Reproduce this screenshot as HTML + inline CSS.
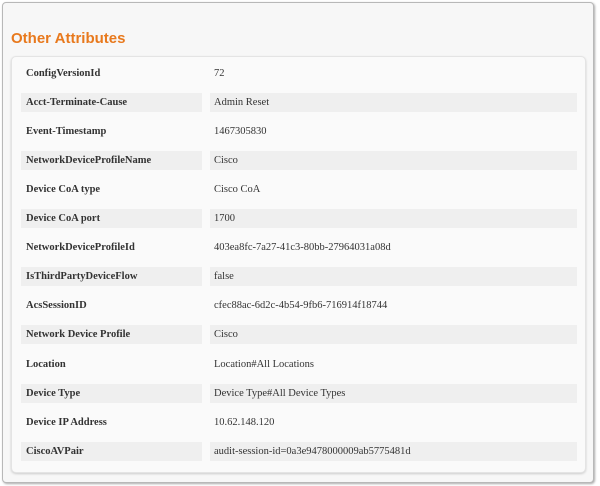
<!DOCTYPE html>
<html><head><style>
body{margin:0;width:600px;height:486px;background:#fff;position:relative;overflow:hidden;font-family:"Liberation Serif",serif;}
.outer{position:absolute;left:2px;top:2px;width:590px;height:479px;border:1px solid #b8b8b8;border-radius:4px;background:#f7f7f7;box-shadow:1px 1px 2px #aaa;}
h2{position:absolute;left:11px;top:30px;margin:0;font:bold 15px "Liberation Sans",sans-serif;color:#e8791d;}
.panel{position:absolute;left:11px;top:56px;width:573px;height:415px;background:#fafafa;border:1px solid #e4e4e4;border-radius:5px;box-shadow:0 1px 2px #ccc;}
.row{position:absolute;left:0;height:19px;font-size:10.5px;color:#333;}
.l,.v{position:absolute;top:0;height:19px;line-height:20px;}
.l{left:9px;width:181px;padding-left:5px;box-sizing:border-box;font-weight:bold;}
.v{left:198px;width:367px;padding-left:4px;box-sizing:border-box;}
.s .l,.s .v{background:#efefef;}
</style></head><body>
<div class="outer"></div>
<h2>Other Attributes</h2>
<div class="panel">
<div class="row" style="top:7px"><div class="l">ConfigVersionId</div><div class="v">72</div></div>
<div class="row s" style="top:36px"><div class="l">Acct-Terminate-Cause</div><div class="v">Admin Reset</div></div>
<div class="row" style="top:65px"><div class="l">Event-Timestamp</div><div class="v">1467305830</div></div>
<div class="row s" style="top:94px"><div class="l">NetworkDeviceProfileName</div><div class="v">Cisco</div></div>
<div class="row" style="top:123px"><div class="l">Device CoA type</div><div class="v">Cisco CoA</div></div>
<div class="row s" style="top:152px"><div class="l">Device CoA port</div><div class="v">1700</div></div>
<div class="row" style="top:181px"><div class="l">NetworkDeviceProfileId</div><div class="v">403ea8fc-7a27-41c3-80bb-27964031a08d</div></div>
<div class="row s" style="top:210px"><div class="l">IsThirdPartyDeviceFlow</div><div class="v">false</div></div>
<div class="row" style="top:239px"><div class="l">AcsSessionID</div><div class="v">cfec88ac-6d2c-4b54-9fb6-716914f18744</div></div>
<div class="row s" style="top:268px"><div class="l">Network Device Profile</div><div class="v">Cisco</div></div>
<div class="row" style="top:298px"><div class="l">Location</div><div class="v">Location#All Locations</div></div>
<div class="row s" style="top:327px"><div class="l">Device Type</div><div class="v">Device Type#All Device Types</div></div>
<div class="row" style="top:356px"><div class="l">Device IP Address</div><div class="v">10.62.148.120</div></div>
<div class="row s" style="top:385px"><div class="l">CiscoAVPair</div><div class="v">audit-session-id=0a3e9478000009ab5775481d</div></div>
</div>
</body></html>
